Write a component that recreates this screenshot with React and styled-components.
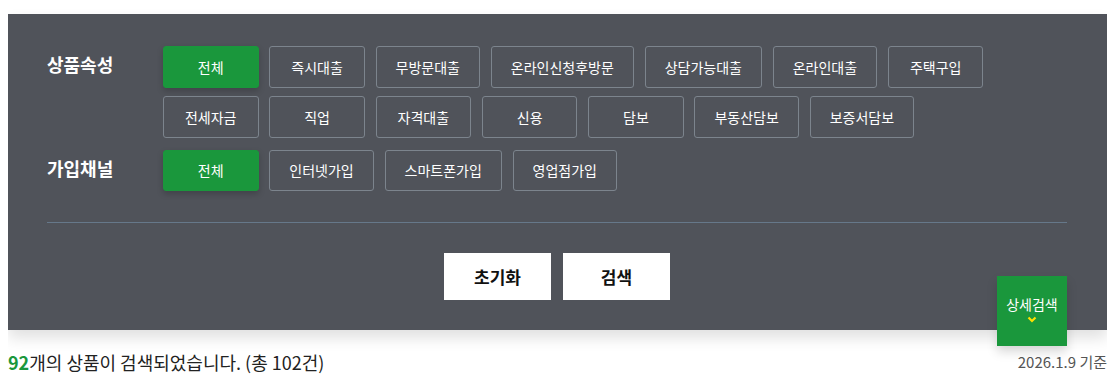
import React, { useState } from "react";
import styled, { createGlobalStyle } from "styled-components";

const GlobalStyle = createGlobalStyle`
  body {
    margin: 8px;
    font-family: "Noto Sans CJK KR", "Noto Sans", sans-serif;
    background: #fff;
  }
`;

const groups = [
  {
    title: "상품속성",
    items: [
      "전체",
      "즉시대출",
      "무방문대출",
      "온라인신청후방문",
      "상담가능대출",
      "온라인대출",
      "주택구입",
      "전세자금",
      "직업",
      "자격대출",
      "신용",
      "담보",
      "부동산담보",
      "보증서담보",
    ],
  },
  {
    title: "가입채널",
    items: ["전체", "인터넷가입", "스마트폰가입", "영업점가입"],
  },
];

const App = () => {
  //? each group keeps its own selected chip
  const [selected, setSelected] = useState({ 0: 0, 1: 0 });

  return (
    <>
      <GlobalStyle />
      <Panel>
        <Groups>
          {groups.map((group, gi) => (
            <Group key={group.title}>
              <GroupTitle>{group.title}</GroupTitle>
              <Chips>
                {group.items.map((item, i) => (
                  <Chip
                    key={item}
                    $active={selected[gi] === i}
                    onClick={() => setSelected({ ...selected, [gi]: i })}
                  >
                    {item}
                  </Chip>
                ))}
              </Chips>
            </Group>
          ))}
        </Groups>
        <Divider />
        <Actions>
          <ActionButton>초기화</ActionButton>
          <ActionButton>검색</ActionButton>
        </Actions>
        <DetailToggle>
          <span>상세검색</span>
          <svg width="10" height="7" viewBox="0 0 10 7">
            <path d="M1.5 1.5 L5 5 L8.5 1.5" fill="none" stroke="#ffe100" strokeWidth="2.2" />
          </svg>
        </DetailToggle>
      </Panel>
      <ResultBar>
        <ResultText>
          <strong>92</strong>개의 상품이 검색되었습니다. (총 102건)
        </ResultText>
        <BaseDate>2026.1.9 기준</BaseDate>
      </ResultBar>
    </>
  );
};

const Panel = styled.section`
  position: relative;
  margin-top: 6px;
  padding: 32px 40px 30px 39px;
  background: #50535a;
  box-shadow: 0 8px 14px rgba(0, 0, 0, 0.12);
`;

const Groups = styled.div`
  display: flex;
  flex-direction: column;
  gap: 12px;
`;

const Group = styled.div`
  display: grid;
  grid-template-columns: 116px 1fr;
  align-items: start;
`;

const GroupTitle = styled.h3`
  margin: 0;
  height: 42px;
  line-height: 37px;
  font-size: 18px;
  font-weight: 700;
  color: #fff;
`;

const Chips = styled.div`
  display: flex;
  flex-wrap: wrap;
  column-gap: 10.8px;
  row-gap: 8.5px;
  max-width: 830px;
`;

const Chip = styled.button`
  box-sizing: border-box;
  min-width: 95.5px;
  height: 41.5px;
  padding: 0 19px;
  border: 1px solid ${({ $active }) => ($active ? "#1a973c" : "#7c848d")};
  border-radius: 3px;
  background: ${({ $active }) => ($active ? "#1a973c" : "transparent")};
  box-shadow: ${({ $active }) => ($active ? "0 3px 6px rgba(0,0,0,0.2)" : "none")};
  color: #fff;
  font-family: inherit;
  font-size: 14px;
  cursor: pointer;
`;

const Divider = styled.hr`
  margin: 30px 0 30px;
  border: 0;
  border-top: 1px solid #66788a;
`;

const Actions = styled.div`
  display: flex;
  justify-content: center;
  gap: 12px;
`;

const ActionButton = styled.button`
  width: 107px;
  height: 47px;
  border: 0;
  background: #fff;
  color: #111;
  font-family: inherit;
  font-size: 17px;
  font-weight: 700;
  cursor: pointer;
`;

const DetailToggle = styled.button`
  position: absolute;
  right: 40px;
  bottom: -16px;
  width: 70px;
  height: 70px;
  display: flex;
  flex-direction: column;
  align-items: center;
  justify-content: center;
  gap: 3px;
  padding: 0 0 4px;
  border: 0;
  background: #1a973c;
  box-shadow: 0 6px 10px rgba(0, 0, 0, 0.15);
  color: #fff;
  font-family: inherit;
  font-size: 14px;
  line-height: 18px;
  cursor: pointer;
`;

const ResultBar = styled.div`
  display: flex;
  justify-content: space-between;
  align-items: center;
  margin-top: 19px;
`;

const ResultText = styled.p`
  margin: 0;
  font-size: 18px;
  color: #222;
  strong {
    color: #1a973c;
    font-weight: 700;
  }
`;

const BaseDate = styled.span`
  font-size: 15px;
  color: #555;
`;

export default App;
